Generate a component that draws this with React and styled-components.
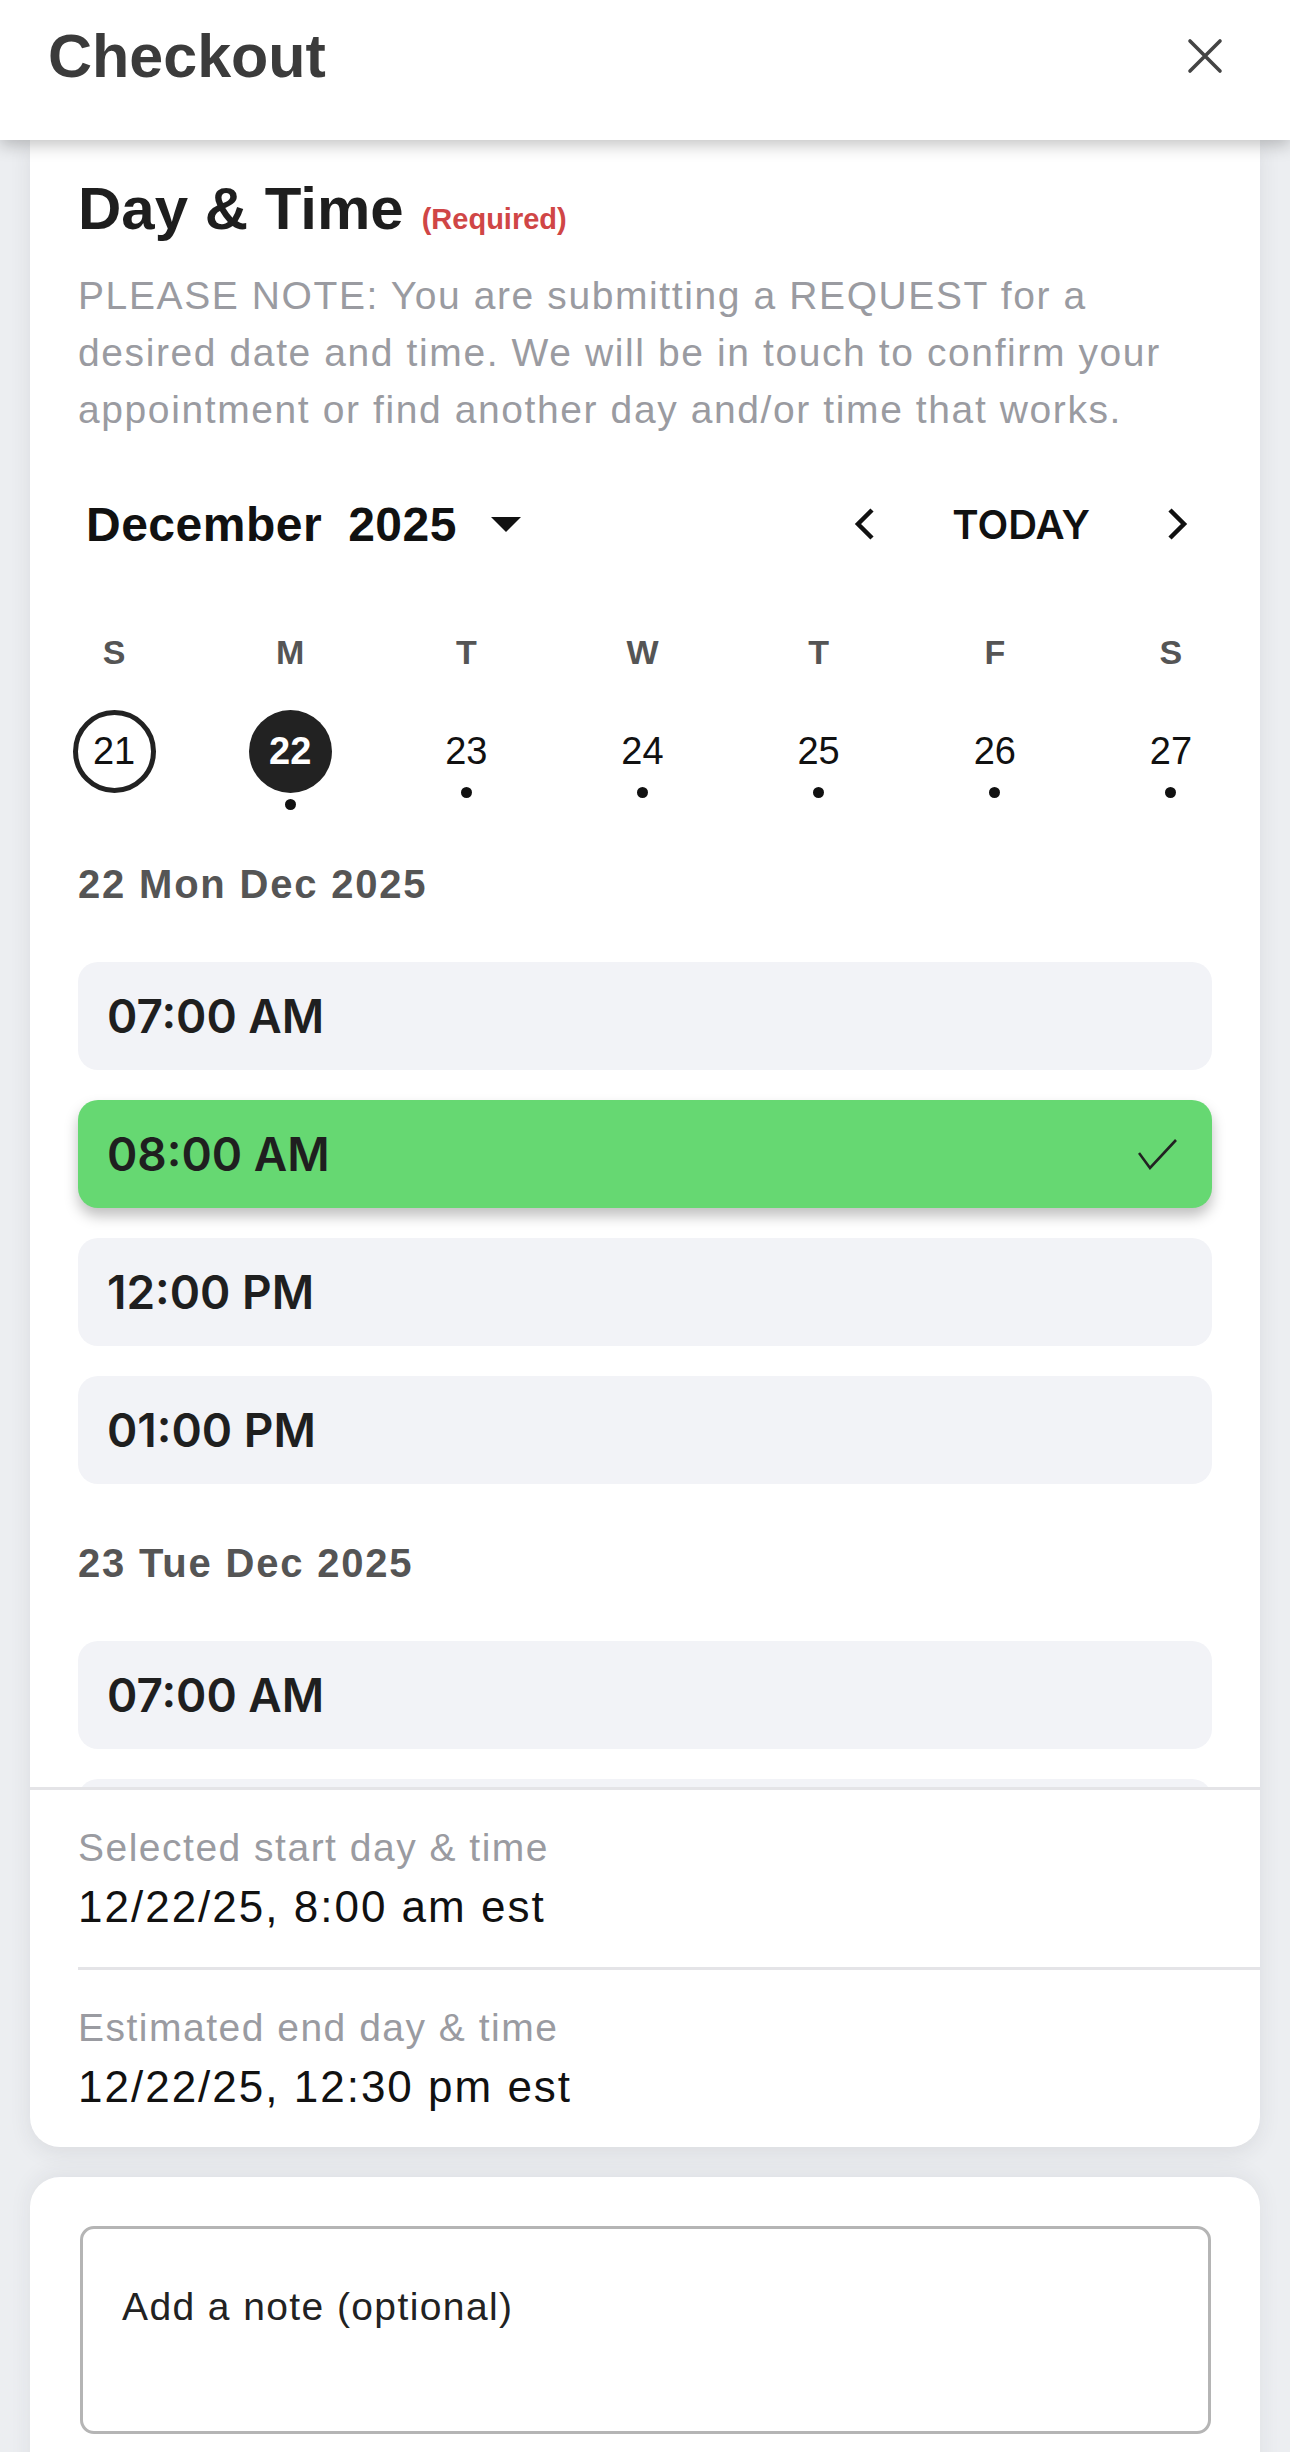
import styled, { createGlobalStyle } from 'styled-components';

const weekdays = ['S', 'M', 'T', 'W', 'T', 'F', 'S'];

const days = [
    { n: 21, today: true, dot: false },
    { n: 22, selected: true, dot: true },
    { n: 23, dot: true },
    { n: 24, dot: true },
    { n: 25, dot: true },
    { n: 26, dot: true },
    { n: 27, dot: true },
];

const schedule = [
    { label: '22 Mon Dec 2025', slots: ['07:00 AM', '08:00 AM', '12:00 PM', '01:00 PM'] },
    { label: '23 Tue Dec 2025', slots: ['07:00 AM', '08:00 AM', '12:00 PM'] },
];

const selectedSlot = '22 Mon Dec 2025|08:00 AM';

const App = () => {
    return (
        <Page>
            <GlobalStyle />
            <Header>
                <Title>Checkout</Title>
                <CloseButton aria-label="close">
                    <svg width="36" height="36" viewBox="0 0 36 36">
                        <path d="M3 3 L33 33 M33 3 L3 33" stroke="#444" strokeWidth="3.6" strokeLinecap="round" />
                    </svg>
                </CloseButton>
            </Header>
            <Main>
                <Card>
                    <Scroll>
                        <HeadingRow>
                            <Heading>Day &amp; Time</Heading>
                            <Required>(Required)</Required>
                        </HeadingRow>
                        <Note>
                            PLEASE NOTE: You are submitting a REQUEST for a desired date and time. We will be in touch to
                            confirm your appointment or find another day and/or time that works.
                        </Note>

                        <CalHeader>
                            <MonthPicker>
                                <span>December</span>
                                <span>2025</span>
                                <Caret />
                            </MonthPicker>
                            <Nav>
                                <svg width="23" height="34" viewBox="0 0 23 34">
                                    <polyline points="19,3 5,17 19,31" fill="none" stroke="#111" strokeWidth="4.5" />
                                </svg>
                                <Today>TODAY</Today>
                                <svg width="23" height="34" viewBox="0 0 23 34">
                                    <polyline points="4,3 18,17 4,31" fill="none" stroke="#111" strokeWidth="4.5" />
                                </svg>
                            </Nav>
                        </CalHeader>

                        <WeekGrid>
                            {weekdays.map((d, i) => (
                                <Weekday key={i}>{d}</Weekday>
                            ))}
                        </WeekGrid>
                        <DayGrid>
                            {days.map((d) => (
                                <DayCell key={d.n}>
                                    <DayCircle $today={d.today} $selected={d.selected}>
                                        {d.n}
                                    </DayCircle>
                                    <Dot $selected={d.selected} $hidden={!d.dot} />
                                </DayCell>
                            ))}
                        </DayGrid>

                        <Schedule>
                            {schedule.map((day) => (
                                <DaySection key={day.label}>
                                    <DateLabel>{day.label}</DateLabel>
                                    <SlotList>
                                        {day.slots.map((s) => {
                                            const active = `${day.label}|${s}` === selectedSlot;
                                            return (
                                                <Slot key={s} $active={active}>
                                                    {s}
                                                    {active && (
                                                        <svg width="39" height="31" viewBox="0 0 39 31">
                                                            <polyline
                                                                points="1,14 12,29 38,1"
                                                                fill="none"
                                                                stroke="#222"
                                                                strokeWidth="2.6"
                                                            />
                                                        </svg>
                                                    )}
                                                </Slot>
                                            );
                                        })}
                                    </SlotList>
                                </DaySection>
                            ))}
                        </Schedule>
                    </Scroll>

                    <Summary>
                        <SummaryItem>
                            <SummaryLabel>Selected start day &amp; time</SummaryLabel>
                            <SummaryValue>12/22/25, 8:00 am est</SummaryValue>
                        </SummaryItem>
                        <SummaryItem $divided>
                            <SummaryLabel>Estimated end day &amp; time</SummaryLabel>
                            <SummaryValue>12/22/25, 12:30 pm est</SummaryValue>
                        </SummaryItem>
                    </Summary>
                </Card>

                <NoteCard>
                    <NoteInput placeholder="Add a note (optional)" />
                </NoteCard>
            </Main>
        </Page>
    );
};

const GlobalStyle = createGlobalStyle`
    * { box-sizing: border-box; }
    html, body {
        margin: 0;
        padding: 0;
        background: #eceef1;
    }
    body {
        font-family: "Liberation Sans", Arial, sans-serif;
    }
    #root {
        width: 1290px;
        height: 2452px;
        overflow: hidden;
    }
`;

const Page = styled.div`
    display: flex;
    flex-direction: column;
    height: 2452px;
    background: #eceef1;
`;

const Header = styled.header`
    position: relative;
    z-index: 2;
    flex-shrink: 0;
    display: flex;
    align-items: center;
    justify-content: space-between;

    height: 140px;
    padding: 0 67px 28px 48px;

    background: #ffffff;
    box-shadow: 0 5px 16px rgba(0, 0, 0, 0.24);
`;

const Title = styled.h1`
    margin: 0;
    font-size: 61px;
    line-height: 70px;
    font-weight: 700;
    color: #3b3b3b;
`;

const CloseButton = styled.button`
    display: flex;
    padding: 0;
    border: none;
    background: none;
    cursor: pointer;
`;

const Main = styled.main`
    display: flex;
    flex-direction: column;
    gap: 30px;
    padding: 0 30px;
`;

const Card = styled.section`
    background: #ffffff;
    border-radius: 0 0 30px 30px;
    box-shadow: 0 6px 22px rgba(40, 45, 60, 0.09);
    overflow: hidden;
`;

const Scroll = styled.div`
    height: 1650px;
    overflow: hidden;
    padding: 33px 48px 0;
    border-bottom: 3px solid #e4e4e7;
`;

const HeadingRow = styled.div`
    display: flex;
    align-items: baseline;
    gap: 18px;
`;

const Heading = styled.h2`
    margin: 0;
    font-size: 60px;
    line-height: 72px;
    font-weight: 700;
    color: #1e1e1e;
`;

const Required = styled.span`
    font-size: 29px;
    font-weight: 700;
    color: #d04646;
`;

const Note = styled.p`
    margin: 22px 0 0;
    font-size: 39px;
    line-height: 57px;
    letter-spacing: 1.6px;
    color: #9a9ba1;
`;

const CalHeader = styled.div`
    display: flex;
    align-items: center;
    justify-content: space-between;
    height: 58px;
    margin-top: 57px;
    padding: 0 23px 0 8px;
`;

const MonthPicker = styled.div`
    display: flex;
    align-items: center;
    gap: 26px;
    font-size: 48px;
    font-weight: 700;
    color: #111;
    letter-spacing: 0.5px;
`;

const Caret = styled.span`
    width: 0;
    height: 0;
    margin-left: 8px;
    border-left: 15px solid transparent;
    border-right: 15px solid transparent;
    border-top: 15px solid #111;
`;

const Nav = styled.div`
    display: flex;
    align-items: center;
    gap: 76px;
`;

const Today = styled.span`
    font-family: Inter, "Liberation Sans", sans-serif;
    font-size: 40px;
    font-weight: 600;
    color: #111;
`;

const WeekGrid = styled.div`
    display: grid;
    grid-template-columns: repeat(7, 1fr);
    margin: 79px -47px 0 -52px;
`;

const Weekday = styled.div`
    text-align: center;
    font-size: 34px;
    line-height: 40px;
    font-weight: 700;
    color: #555;
`;

const DayGrid = styled.div`
    display: grid;
    grid-template-columns: repeat(7, 1fr);
    align-items: start;
    margin: 38px -47px 0 -52px;
`;

const DayCell = styled.div`
    display: flex;
    flex-direction: column;
    align-items: center;
`;

const DayCircle = styled.div`
    display: flex;
    align-items: center;
    justify-content: center;
    width: 83px;
    height: 83px;
    border-radius: 50%;
    border: 5px solid ${({ $today }) => ($today ? '#222' : 'transparent')};
    background: ${({ $selected }) => ($selected ? '#222' : 'transparent')};
    color: ${({ $selected }) => ($selected ? '#fff' : '#111')};
    font-size: 38px;
    font-weight: ${({ $selected }) => ($selected ? 700 : 400)};
`;

const Dot = styled.span`
    width: 11px;
    height: 11px;
    margin-top: ${({ $selected }) => ($selected ? '6px' : '-6px')};
    border-radius: 50%;
    background: #111;
    visibility: ${({ $hidden }) => ($hidden ? 'hidden' : 'visible')};
`;

const Schedule = styled.div`
    display: flex;
    flex-direction: column;
    gap: 56px;
    margin-top: 51px;
`;

const DaySection = styled.div`
    display: flex;
    flex-direction: column;
    gap: 55px;
`;

const DateLabel = styled.div`
    font-size: 40px;
    line-height: 46px;
    font-weight: 700;
    letter-spacing: 1.8px;
    color: #555;
`;

const SlotList = styled.div`
    display: flex;
    flex-direction: column;
    gap: 30px;
`;

const Slot = styled.div`
    display: flex;
    align-items: center;
    justify-content: space-between;
    height: 108px;
    padding: 0 35px 0 29px;
    border-radius: 20px;

    background: ${({ $active }) => ($active ? '#66d872' : '#f2f3f7')};
    box-shadow: ${({ $active }) => ($active ? '0 8px 14px rgba(0, 0, 0, 0.25)' : 'none')};

    font-family: Inter, "Liberation Sans", sans-serif;
    font-size: 46px;
    font-weight: 600;
    color: #1f1f1f;
`;

const Summary = styled.div`
    padding-left: 48px;
`;

const SummaryItem = styled.div`
    display: flex;
    flex-direction: column;
    gap: 12px;
    padding: 36px 0 35px;
    border-top: ${({ $divided }) => ($divided ? '3px solid #e4e4e7' : 'none')};
`;

const SummaryLabel = styled.div`
    font-size: 39px;
    line-height: 44px;
    letter-spacing: 1.5px;
    color: #9a9ba1;
`;

const SummaryValue = styled.div`
    font-size: 44px;
    line-height: 50px;
    letter-spacing: 2px;
    color: #111;
`;

const NoteCard = styled.section`
    min-height: 400px;
    padding: 49px 49px 0 50px;
    background: #ffffff;
    border-radius: 30px 30px 0 0;
    box-shadow: 0 -4px 22px rgba(40, 45, 60, 0.07);
`;

const NoteInput = styled.textarea`
    display: block;
    width: 100%;
    height: 208px;
    padding: 55px 39px;
    border: 3px solid #b5b5b5;
    border-radius: 14px;
    resize: none;
    outline: none;

    font-family: "Liberation Sans", Arial, sans-serif;
    font-size: 39px;
    line-height: 46px;
    letter-spacing: 1.4px;
    color: #222;

    &::placeholder {
        color: #222;
        opacity: 1;
    }
`;

export default App;
